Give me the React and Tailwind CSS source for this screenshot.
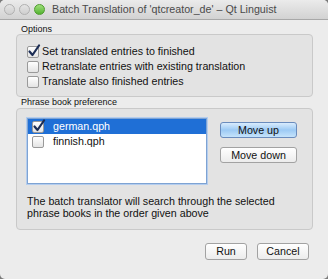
import React from 'react';

const font = { fontFamily: '"Liberation Sans", Arial, sans-serif' };

const Check = ({ checked }) => (
    <span className="relative inline-flex w-[12px] h-[12px] shrink-0 rounded-[2px] border border-[#9a9a9a] bg-gradient-to-b from-white to-[#e4e4e4]">
        {checked && (
            <svg viewBox="0 0 14 14" className="absolute -left-[1px] -top-[3px] w-[14px] h-[14px]">
                <path d="M2.5 7.5 L5.5 11 L12 1.5" fill="none" stroke="#1c2d55" strokeWidth="2.2" strokeLinecap="round" strokeLinejoin="round" />
            </svg>
        )}
    </span>
);

const Option = ({ checked, label }) => (
    <div className="flex items-center gap-[3px] h-[15px]">
        <Check checked={checked} />
        <span className="text-[10.7px] leading-[15px] text-[#111]">{label}</span>
    </div>
);

const Button = ({ children, primary, className = '' }) => (
    <button
        className={`rounded-[3px] border text-[10.7px] leading-none flex items-center justify-center text-[#111] ${primary ? 'border-[#6a8cbd] bg-gradient-to-b from-[#d9ecfd] via-[#9ccaf4] to-[#c5e3fb]' : 'border-[#a2a2a2] bg-gradient-to-b from-white to-[#ececec]'} ${className}`}
    >
        {children}
    </button>
);

const Dot = ({ color }) => (
    <span className={`w-[11px] h-[11px] rounded-full border ${color}`} />
);

export default function App() {
    return (
        <div className="w-[328px] h-[279px] bg-[#7a7a7a]" style={font}>
            <div className="w-full h-full bg-[#ececec] rounded-[5px] overflow-hidden flex flex-col">
                <div className="h-[20px] shrink-0 flex items-center px-[4px] bg-gradient-to-b from-[#ebebeb] to-[#d2d2d2] border-b border-[#a8a8a8]">
                    <div className="flex items-center gap-[4px]">
                        <Dot color="border-[#b0b0b0] bg-gradient-to-b from-[#e4e4e4] to-[#cfcfcf]" />
                        <Dot color="border-[#b0b0b0] bg-gradient-to-b from-[#e4e4e4] to-[#cfcfcf]" />
                        <Dot color="border-[#4e9a2e] bg-gradient-to-b from-[#9fe07a] to-[#52b22e]" />
                    </div>
                    <span className="ml-[7px] text-[10.7px] text-[#4a4a4a] whitespace-nowrap">Batch Translation of 'qtcreator_de' – Qt Linguist</span>
                </div>

                <div className="pl-[16px] pr-[15px] pt-[4px] flex flex-col">
                    <div className="pl-[5px] text-[9px] text-[#111] leading-[10px]">Options</div>
                    <div className="h-[63px] rounded-[4px] border border-[#c9c9c9] bg-[#e3e3e3] pl-[10px] pt-[9px] flex flex-col">
                        <Option checked label="Set translated entries to finished" />
                        <Option label="Retranslate entries with existing translation" />
                        <Option label="Translate also finished entries" />
                    </div>

                    <div className="pl-[5px] text-[9px] text-[#111] leading-[11px]">Phrase book preference</div>
                    <div className="h-[122px] rounded-[4px] border border-[#c9c9c9] bg-[#e3e3e3] pl-[10px] pr-[15px] pt-[9px] flex flex-col">
                        <div className="flex">
                            <div className="w-[180px] h-[66px] bg-white border border-[#7ea3d3] shadow-[0_0_0_1px_#b4cdee] flex flex-col">
                                <div className="h-[15px] bg-[#1f6fd6] flex items-center pl-[4px] gap-[9px]">
                                    <Check checked />
                                    <span className="text-[10.7px] text-white">german.qph</span>
                                </div>
                                <div className="h-[15px] flex items-center pl-[4px] gap-[9px]">
                                    <Check />
                                    <span className="text-[10.7px] text-[#111]">finnish.qph</span>
                                </div>
                            </div>
                            <div className="ml-auto flex flex-col gap-[9px] pt-[4px]">
                                <Button primary className="w-[77px] h-[16px]">Move up</Button>
                                <Button className="w-[77px] h-[16px]">Move down</Button>
                            </div>
                        </div>
                        <div className="mt-[11px] text-[10.7px] leading-[12px] text-[#111] whitespace-nowrap">
                            The batch translator will search through the selected<br />phrase books in the order given above
                        </div>
                    </div>

                    <div className="flex justify-end gap-[10px] mt-[13px] pr-[4px]">
                        <Button className="w-[42px] h-[17px]">Run</Button>
                        <Button className="w-[52px] h-[17px]">Cancel</Button>
                    </div>
                </div>
            </div>
        </div>
    );
}
